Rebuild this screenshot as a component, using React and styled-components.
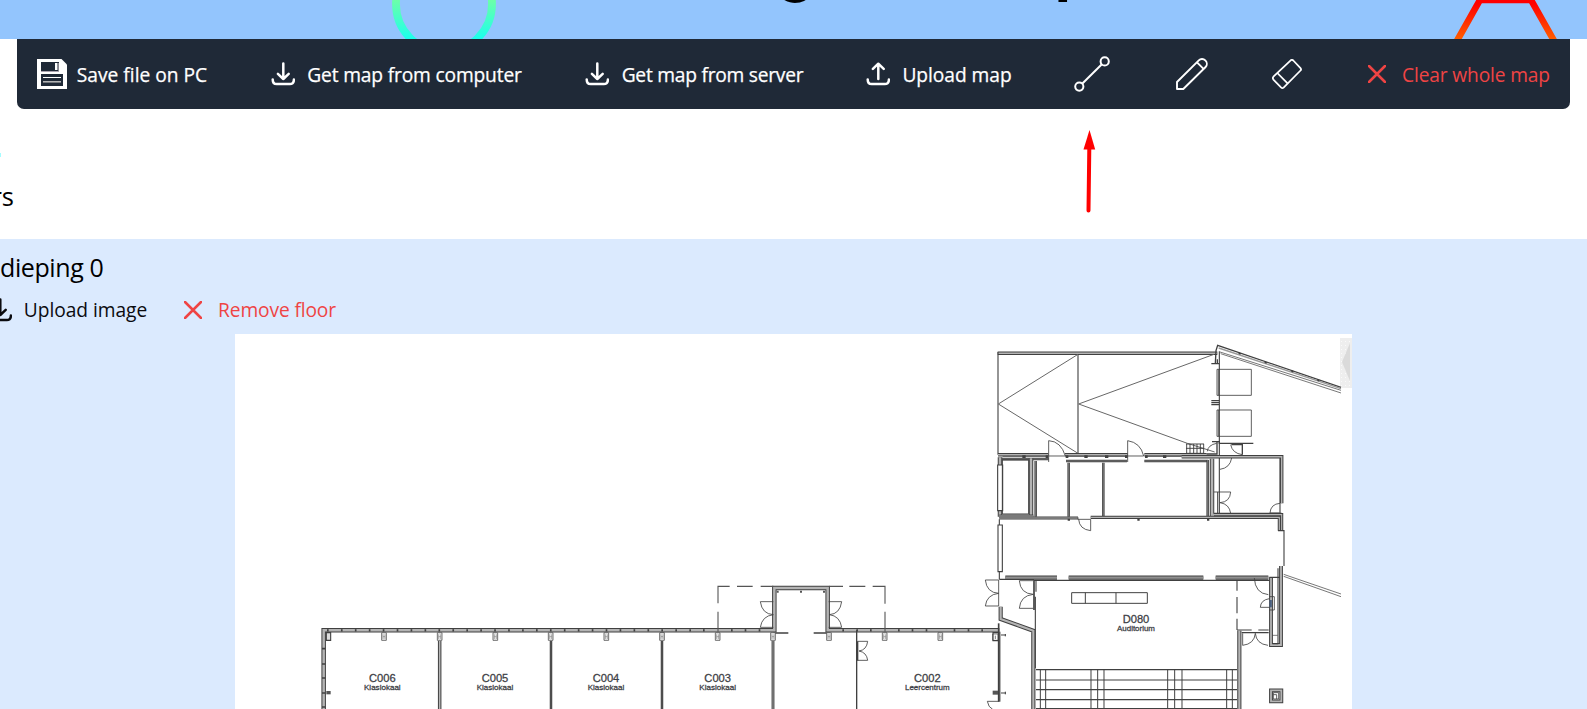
import React from "react";
import styled, { createGlobalStyle, css } from "styled-components";

const GlobalStyle = createGlobalStyle`
  * { box-sizing: border-box; }
  html, body { margin: 0; padding: 0; background: #fff; overflow: hidden; }
  body { font-family: "Open Sans", "Noto Sans", sans-serif; color: #000; }
`;

const Page = styled.main`
  width: 1587px;
  height: 709px;
  overflow: hidden;
  display: flex;
  flex-direction: column;
`;

const Header = styled.header`
  height: 39px;
  flex: none;
  background: #93c5fd;
  svg { display: block; }
`;

const Toolbar = styled.nav`
  flex: none;
  display: flex;
  align-items: center;
  height: 70px;
  margin: 0 17px;
  padding-left: 20px;
  background: #1f2937;
  border-radius: 0 0 7px 7px;
`;

const Tool = styled.button`
  display: flex;
  align-items: center;
  flex: none;
  padding: 0;
  border: 0;
  background: none;
  font-family: inherit;
  color: ${(p) => (p.$danger ? "#ef4444" : p.$dark ? "#0b0b0f" : "#fff")};
  margin-left: ${(p) => p.$before || 0}px;
  gap: ${(p) => p.$gap || 0}px;
  svg { display: block; flex: none; }
`;

const Label = styled.span`
  display: block;
  white-space: nowrap;
  font-size: 19.2px;
  line-height: 28px;
  width: ${(p) => p.$width}px;
  letter-spacing: ${(p) => p.$tracking || 0}px;
  ${Toolbar} & { padding-top: 2px; }
  ${(p) => p.$strong && css`-webkit-text-stroke: 0.25px currentColor;`}
`;

const Intro = styled.section`
  flex: none;
  height: 130px;
  position: relative;
`;

const Pointer = styled.svg`
  position: absolute;
  left: 1065px;
  top: 20px;
`;

const Spark = styled.i`
  position: absolute;
  left: 0;
  top: 44px;
  width: 1px;
  height: 4px;
  background: #a5fdff;
`;

const IntroText = styled.p`
  margin: 0;
  padding-top: 68px;
  width: 14px;
  display: flex;
  justify-content: flex-end;
  font-size: 25.5px;
  line-height: 38px;
`;

const Floor = styled.section`
  flex: 1;
  background: #dbeafe;
  display: flex;
  flex-direction: column;
`;

const FloorTitle = styled.h2`
  margin: 0;
  padding-top: 9px;
  height: 54px;
  font-weight: 400;
  font-size: 25px;
  line-height: 38px;
  letter-spacing: -0.4px;
  white-space: nowrap;
`;

const FloorActions = styled.div`
  display: flex;
  align-items: center;
  height: 33px;
  margin-left: -12px;
`;

const Plan = styled.figure`
  margin: 8px 0 0 235px;
  width: 1117px;
  height: 375px;
  background: #fff;
  svg { display: block; }
`;

function TransferIcon({ up }) {
  return (
    <svg width="24" height="24" viewBox="0 0 24 24" fill="none" stroke="currentColor" strokeWidth="2.5" strokeLinecap="round" strokeLinejoin="round">
      <path d="M1.700 17.400c0 3.400 1.300 4.700 4 4.700h13.200c2.700 0 4-1.300 4-4.700" />
      <path d={up ? "M12.300 17V1.700M6.900 6.900 12.300 1.700l5.400 5.200" : "M12.300 1.400v15.500M6.900 11.800l5.400 5.200 5.400-5.200"} />
    </svg>
  );
}

function SaveIcon() {
  return (
    <svg width="30" height="30" viewBox="0 0 30 30">
      <path d="M0 0H24.500L30 5.500V30H0Z" fill="#fff" />
      <path d="M4 3H22V12H4ZM4 15H26V27H4Z" fill="#1f2937" />
      <path d="M18 4h2.500v7h-2.500z" fill="#fff" />
      <path d="M21.500 4v8" stroke="#8a8791" />
      <path d="M4 12.500H22" stroke="#aaa3b0" />
      <path d="M6 18.500H24" stroke="#fff" />
      <path d="M6 22.800H24" stroke="#bbb" strokeWidth="1.500" />
    </svg>
  );
}

function CrossIcon() {
  return (
    <svg width="18" height="18" viewBox="0 0 18 18" stroke="currentColor" strokeWidth="2.500" strokeLinecap="round">
      <path d="M1 1 17 17M17 1 1 17" />
    </svg>
  );
}

function LineIcon() {
  return (
    <svg width="36" height="36" viewBox="0 0 36 36" fill="none" stroke="currentColor" strokeWidth="2">
      <circle cx="5.300" cy="30.600" r="4.100" />
      <circle cx="30.700" cy="5.400" r="4.100" />
      <path d="M8.400 27.500 27.600 8.500" />
    </svg>
  );
}

function PencilIcon() {
  return (
    <svg width="32" height="32" viewBox="0 0 32 32" fill="none" stroke="currentColor" strokeWidth="1.900" strokeLinejoin="round">
      <path d="M1 31V24L22.800 2.400C24.500.7 27.400.5 29.300 2.400S31.300 7.300 29.600 9L7.300 31Z" />
      <path d="m21 4.400 6.800 6.700" />
    </svg>
  );
}

function EraserIcon() {
  return (
    <svg width="30" height="30" viewBox="0 0 30 30" fill="none" stroke="currentColor" strokeWidth="1.750" strokeLinejoin="round">
      <path d="M1.400 17.700 18.700 1.300Q20 .3 21.300 1.500L28.500 9.200Q29.600 10.400 28.500 11.500L11.600 28.600Q10.300 29.600 9 28.400L1.400 20.600Q.3 19 1.400 17.700Z" />
      <path d="M5.300 14 15.800 24.600" />
    </svg>
  );
}

function HeaderArt() {
  return (
    <svg width="1587" height="39" viewBox="0 0 1587 39" fill="none">
      <defs>
        <linearGradient id="ring" gradientUnits="userSpaceOnUse" x1="0" y1="-5" x2="0" y2="39">
          <stop offset="0" stopColor="#76ffa0" />
          <stop offset="1" stopColor="#1cffec" />
        </linearGradient>
        <linearGradient id="hex" gradientUnits="userSpaceOnUse" x1="0" y1="4" x2="0" y2="41">
          <stop offset="0" stopColor="#ff0000" />
          <stop offset="1" stopColor="#ff6200" />
        </linearGradient>
      </defs>
      <circle cx="444" cy="4" r="48" stroke="url(#ring)" strokeWidth="7.800" />
      <path d="M1454 46 1480 0H1531L1557 46" stroke="url(#hex)" strokeWidth="6.600" />
      <text x="775.500 1054" y="-13" fill="#000" fontFamily="Roboto, sans-serif" fontWeight="500" fontSize="73">gp</text>
    </svg>
  );
}

/* Masonry drawn as a dark outline around a grey core. */
function Wall({ d, w = 10, core = "#b4b4b4" }) {
  return (
    <g fill="none" strokeLinejoin="miter">
      <path d={d} stroke="#404040" strokeWidth={w + 0.5} />
      <path d={d} stroke={core} strokeWidth={w - 5.5} />
    </g>
  );
}

function RoomLabel({ x, y, code, name, nameWidth }) {
  return (
    <g fill="#3d4045" stroke="#3d4045" strokeWidth=".8" fontFamily="Liberation Sans, Arial, sans-serif" textAnchor="middle">
      <text x={x} y={y} fontSize="33" textLength="80" lengthAdjust="spacingAndGlyphs">{code}</text>
      <text x={x} y={y + 24} fontSize="22.500" textLength={nameWidth} lengthAdjust="spacingAndGlyphs">{name}</text>
    </g>
  );
}

function Bracket({ x }) {
  return (
    <g>
      <path d={`M${x - 7} 188h14v23h-14z`} fill="#eee" stroke="#555" strokeWidth="2.500" />
      <path d={`M${x - 3} 193v14M${x + 3} 193v14M${x - 3} 200h6`} strokeWidth="1.500" stroke="#666" />
    </g>
  );
}

function NorthWing() {
  return (
    <g transform="translate(980 330) scale(.333333)">
      <Wall d="M53 70H712" w={10} />
      <path d="M54 66V374M294 73V370M718 64V552" />
      <path d="M294 73 55 222 294 370M702 73 296 222 622 340 704 366" stroke="#666" strokeWidth="3" />
      <path d="M711 118H814V196H711ZM711 240H814V319H711ZM715 118V196M715 240V319" strokeWidth="2.500" />
      <path d="M706 100 708 62 713 46 1083 172" strokeWidth="4" />
      <path d="M716 54 1083 176" stroke="#999" strokeWidth="4" />
      <path d="M720 66 1083 181M722 71 1083 189" strokeWidth="3" stroke="#777" />
      <path d="M776 69l6 3M854 96l6 3M934 122l6 3M1012 149l6 3" strokeWidth="5" />
      <path d="M694 101H718M712 88V101M694 212H718M694 218H718M694 224H718M696 335H718V340H820M711 335V372H680M754 344H787V374" strokeWidth="4" />
      <path d="M752 344Q757 370 787 374M682 364Q684 345 710 340" strokeWidth="2.500" />
      <path d="M620 342V370M630 342V370M641 342V370M651 342V370M661 342V370M671 342V370M618 342H672M618 355H672M618 370H672" strokeWidth="2.800" />

      <Wall d="M54 374H205M255 374H443M493 374H680" w={10} />
      <Wall d="M65 387H206M258 393H441M493 393H685" w={7} />
      <path d="M68 379H200M260 379H438M496 379H605" strokeWidth="2" />
      <path d="M127 380h10M197 380h8M257 380h8M313 380h10M375 380h10M435 380h8M495 380h8M549 380h10" strokeWidth="8" />
      <Wall d="M605 380H820M718 380H905V520" w={10} />
      <path d="M206 396V332Q243 334 256 378H206M443 396V332Q482 338 491 378H443" strokeWidth="2.500" />
      <path d="M720 418Q750 414 755 384M718 486H752Q750 516 720 518Q748 522 752 550M700 486H718M900 520Q872 522 870 549H902" strokeWidth="2.500" />
      <path d="M713 486V550" strokeWidth="3" />

      <Wall d="M60 382V560M153 385V560" w={13} />
      <path d="M53 405H68V542H53Z" fill="#fff" />
      <path d="M67 390H146V552H67Z" strokeWidth="3" />
      <Wall d="M167 393V560M266 398V560M370 398V560M683 390V560" w={7} />
      <Wall d="M696 386V555H905" w={13} />
      <path d="M900 384V548" />
    </g>
  );
}

function Auditorium() {
  return (
    <g transform="translate(980 500) scale(.333333)">
      <Wall d="M58 49H160" w={11} />
      <Wall d="M58 54H294M332 52H898V92" w={9} />
      <Wall d="M702 44H905V92" w={9} />
      <path d="M294 52V58H332V92Q298 88 296 58" strokeWidth="2.500" />
      <path d="M263 59h7M472 59h7M681 59h7" strokeWidth="6" />
      <path d="M54 75H67V215H54ZM58 58V75M58 215V238" fill="none" />
      <path d="M894 92H912V198" />
      <Wall d="M903 198V435H873V232" w={11} />
      <path d="M894 205V430M868 232H900" />
      <path d="M58 238H162M162 241H868" />
      <Wall d="M76 233H231M266 233H670M707 233H865" w={12} core="#909090" />
      <path d="M911 223 1083 282M911 229 1083 290" strokeWidth="3" stroke="#777" />

      <path d="M56 240H16Q20 278 56 280Q20 284 16 318H56V240M160 242H118Q121 281 160 283Q121 287 118 325H160" strokeWidth="2.500" />
      <path d="M162 240V330" strokeWidth="5" />
      <path d="M168 242V275M166 290V505" />
      <Wall d="M62 320V357L160 392V630" w={12} />
      <path d="M56 370V605" strokeWidth="5" />
      <path d="M63 405H78M76 402V409M63 579H78M76 575V583" strokeWidth="3" />
      <path d="M38 402H54V421H38ZM46 407V417" strokeWidth="2" />
      <path d="M38 578H54" strokeWidth="12" stroke="#555" />
      <path d="M56 604H22Q25 622 38 628" strokeWidth="2.500" />

      <path d="M275 278H502V310H275ZM316 278V310M408 278V310" strokeWidth="3" />
      <RoomLabel x={468} y={369} code="D080" name="Auditorium" nameWidth="114" />

      <path d="M771 241V272M771 291V340M771 356V390" />
      <path d="M823 234Q825 280 865 284M868 296Q842 300 841 322H870M868 290H883V330H868" strokeWidth="2.500" />
      <path d="M872 300V322" stroke="#4a6080" strokeWidth="7" />
      <path d="M771 390H815M835 390H866M785 398H866" />
      <path d="M788 400V436Q823 432 826 400Q829 432 864 436" strokeWidth="2.500" />
      <path d="M877 406H893M877 432H895" strokeWidth="2" />
      <Wall d="M778 392V630" w={12} />

      <path d="M168 509H771M168 540H771M168 569H771M168 599H771M168 626H771" strokeWidth="3.500" />
      <path d="M181 509V630M197 509V630M333 509V630M353 509V630M372 509V630M563 509V630M584 509V630M606 509V630M740 509V630M757 509V630" strokeWidth="3" />
      <Wall d="M873 571H904V604H873Z" w={11} />
      <path d="M880 578H896V597H880ZM880 584H890V597" strokeWidth="2.500" />
    </g>
  );
}

function ClassroomsWest() {
  return (
    <g transform="translate(300 570) scale(.333333)">
      <Wall d="M71 430V181H1080" w={13} />
      {Array.from({ length: 25 }, (_, i) => (
        <path key={i} d={`M${81 + i * 41.8} 181h5`} strokeWidth="7" />
      ))}
      <path d="M66 236H76M66 282H76M66 324H76M66 369H76M66 411H76" strokeWidth="5" />
      <path d="M79 188H92V211H79Z" fill="#ddd" />
      <path d="M79 368H92" strokeWidth="10" stroke="#555" />
      {[252, 419, 586, 752, 919, 1086].map((x) => <Bracket key={x} x={x} />)}
      <Wall d="M419 213V430" w={10} />
      <Wall d="M753 213V430M1086 213V430" w={7} core="#777" />
      <RoomLabel x={247} y={336} code="C006" name="Klaslokaal" nameWidth="110" />
      <RoomLabel x={585} y={336} code="C005" name="Klaslokaal" nameWidth="110" />
      <RoomLabel x={918} y={336} code="C004" name="Klaslokaal" nameWidth="110" />
    </g>
  );
}

function ClassroomsEast() {
  return (
    <g transform="translate(660 570) scale(.333333)">
      <Wall d="M0 181H343V54H503V181H1018" w={13} />
      {[6, 48, 90, 131, 215, 256, 298, 549, 591, 632, 716, 757, 799, 883, 925, 966].map((x) => (
        <path key={x} d={`M${x - 2} 181h5`} strokeWidth="7" />
      ))}
      <path d="M174 185V125M174 100V49H209M231 49H278M302 49H340M508 49H549M568 49H616M638 49H675V101M675 125V185" stroke="#555" />
      <path d="M340 95H301Q306 132 340 134Q306 138 301 172H340M506 95H545Q540 132 508 134Q540 138 545 172H506" strokeWidth="2.500" />
      <path d="M340 189H385M461 189H510" strokeWidth="4" />
      <path d="M350 65h6M420 65h6M489 65h6" strokeWidth="6" stroke="#555" />
      {[173, 339, 507, 674, 841].map((x) => <Bracket key={x} x={x} />)}
      <path d="M999 188H1016V212H999Z" />
      <Wall d="M339 213V430" w={8} />
      <path d="M590 181V430M593 214V272" strokeWidth="4" />
      <path d="M593 214H623Q620 240 597 243Q620 247 623 271H593" strokeWidth="2.500" />
      <RoomLabel x={173} y={336} code="C003" name="Klaslokaal" nameWidth="110" />
      <RoomLabel x={802} y={336} code="C002" name="Leercentrum" nameWidth="134" />
      <path d="M1018 185V395" strokeWidth="7" stroke="#666" />
    </g>
  );
}

function FloorPlan() {
  return (
    <svg width="1117" height="375" viewBox="235 334 1117 375" fill="none" stroke="#404040" strokeWidth="3.300">
      <defs>
        <pattern id="dots" width="4" height="4" patternUnits="userSpaceOnUse">
          <path d="M0 0h4v4H0z" fill="#eee" stroke="none" />
          <path d="M1 1h1v1H1z" fill="#fafafa" stroke="none" />
        </pattern>
      </defs>
      <path d="M1340 338h12v50h-12z" fill="url(#dots)" stroke="none" />
      <path d="m1342 362 8-19v38z" fill="#dadada" stroke="none" />
      <ClassroomsWest />
      <ClassroomsEast />
      <NorthWing />
      <Auditorium />
    </svg>
  );
}

export default function App() {
  return (
    <Page>
      <GlobalStyle />
      <Header><HeaderArt /></Header>
      <Toolbar>
        <Tool $gap={9}><SaveIcon /><Label $strong $width={132}>Save file on PC</Label></Tool>
        <Tool $before={63} $gap={11}><TransferIcon /><Label $strong $width={217} $tracking={-0.16}>Get map from computer</Label></Tool>
        <Tool $before={62} $gap={11}><TransferIcon /><Label $strong $width={185} $tracking={-0.24}>Get map from server</Label></Tool>
        <Tool $before={61} $gap={12}><TransferIcon up /><Label $strong $width={110} $tracking={-0.05}>Upload map</Label></Tool>
        <Tool $before={62} aria-label="Draw line"><LineIcon /></Tool>
        <Tool $before={66} aria-label="Draw"><PencilIcon /></Tool>
        <Tool $before={64} aria-label="Erase"><EraserIcon /></Tool>
        <Tool $before={66} $gap={15} $danger><CrossIcon /><Label $width={150} $tracking={-0.15}>Clear whole map</Label></Tool>
      </Toolbar>
      <Intro>
        <Spark />
        <IntroText>rs</IntroText>
        <Pointer width="50" height="90" viewBox="1065 129 50 90">
          <path d="M1089.500 130 1095.200 149.500H1083.500Z" fill="#f00" />
          <path d="M1089.300 148 1088.500 210.500" stroke="#f00" strokeWidth="4" strokeLinecap="round" />
        </Pointer>
      </Intro>
      <Floor>
        <FloorTitle>dieping 0</FloorTitle>
        <FloorActions>
          <Tool $gap={11} $dark><TransferIcon /><Label $width={125} $tracking={-0.05}>Upload image</Label></Tool>
          <Tool $before={36} $gap={15} $danger><CrossIcon /><Label $width={120} $tracking={-0.13}>Remove floor</Label></Tool>
        </FloorActions>
        <Plan><FloorPlan /></Plan>
      </Floor>
    </Page>
  );
}
